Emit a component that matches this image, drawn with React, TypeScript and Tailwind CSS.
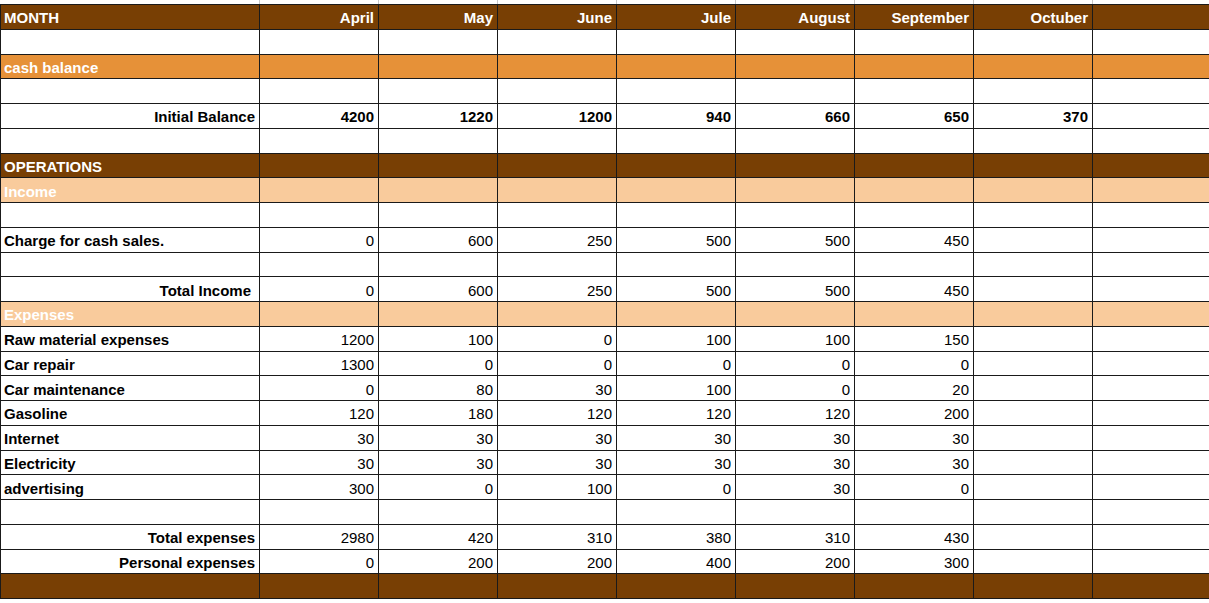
type Tone = 'brown' | 'orange' | 'peach' | 'white';

type Row = {
  tone: Tone;
  label?: string;
  right?: boolean;
  labelClass?: string;
  values?: (string | number)[];
  boldValues?: boolean;
};

const months = ['April', 'May', 'June', 'Jule', 'August', 'September', 'Octuber'];

const rows: Row[] = [
  { tone: 'white' },
  { tone: 'orange', label: 'cash balance' },
  { tone: 'white' },
  { tone: 'white', label: 'Initial Balance', right: true, values: [4200, 1220, 1200, 940, 660, 650, 370], boldValues: true },
  { tone: 'white' },
  { tone: 'brown', label: 'OPERATIONS' },
  { tone: 'peach', label: 'Income' },
  { tone: 'white' },
  { tone: 'white', label: 'Charge for cash sales.', values: [0, 600, 250, 500, 500, 450] },
  { tone: 'white' },
  { tone: 'white', label: 'Total Income', right: true, labelClass: 'pr-[8px]', values: [0, 600, 250, 500, 500, 450] },
  { tone: 'peach', label: 'Expenses' },
  { tone: 'white', label: 'Raw material expenses', values: [1200, 100, 0, 100, 100, 150] },
  { tone: 'white', label: 'Car repair', values: [1300, 0, 0, 0, 0, 0] },
  { tone: 'white', label: 'Car maintenance', values: [0, 80, 30, 100, 0, 20] },
  { tone: 'white', label: 'Gasoline', values: [120, 180, 120, 120, 120, 200] },
  { tone: 'white', label: 'Internet', values: [30, 30, 30, 30, 30, 30] },
  { tone: 'white', label: 'Electricity', values: [30, 30, 30, 30, 30, 30] },
  { tone: 'white', label: 'advertising', values: [300, 0, 100, 0, 30, 0] },
  { tone: 'white' },
  { tone: 'white', label: 'Total expenses', right: true, values: [2980, 420, 310, 380, 310, 430] },
  { tone: 'white', label: 'Personal expenses', right: true, values: [0, 200, 200, 400, 200, 300] },
  { tone: 'brown' },
];

const toneBg: Record<Tone, string> = {
  brown: 'bg-[#783f04] text-white',
  orange: 'bg-[#e69138] text-white',
  peach: 'bg-[#f9cb9c] text-white',
  white: 'bg-white text-black',
};

const cellBase = 'flex h-full shrink-0 items-end pb-[2.5px] border-r border-[#1a1a1a] overflow-hidden whitespace-nowrap';
const labelCol = 'w-[260px] border-l pl-[3px] pr-[4px]';
const numCol = 'w-[119px] justify-end pr-[4px]';

function SheetRow({ row }: { row: Row }) {
  return (
    <div className={`flex h-[24.75px] border-b border-[#1a1a1a] ${toneBg[row.tone]}`}>
      <div className={`${cellBase} ${labelCol} font-bold ${row.right ? 'justify-end' : 'justify-start'} ${row.labelClass ?? ''}`}>
        {row.label}
      </div>
      {months.map((_, i) => (
        <div key={i} className={`${cellBase} ${numCol} ${row.boldValues ? 'font-bold' : ''}`}>
          {row.values?.[i] ?? ''}
        </div>
      ))}
      <div className="flex-1" />
    </div>
  );
}

export default function App() {
  return (
    <div className="h-[603px] w-[1209px] overflow-hidden bg-white font-['Liberation_Sans',Arial,sans-serif] text-[15px] leading-[17px]">
      {/* sliver of the row above */}
      <div className="flex h-[4px]">
        <div className="w-[260px] shrink-0 border-r border-[#c8c8c8]" />
        {months.map((m) => (
          <div key={m} className="w-[119px] shrink-0 border-r border-[#c8c8c8]" />
        ))}
      </div>

      <div className="border-t border-[#1a1a1a]">
        <div className="flex h-[24.75px] border-b border-[#1a1a1a] bg-[#783f04] font-bold text-white">
          <div className={`${cellBase} ${labelCol}`}>MONTH</div>
          {months.map((m) => (
            <div key={m} className={`${cellBase} ${numCol}`}>
              {m}
            </div>
          ))}
          <div className="flex-1" />
        </div>
        {rows.map((r, i) => (
          <SheetRow key={i} row={r} />
        ))}
      </div>
    </div>
  );
}
